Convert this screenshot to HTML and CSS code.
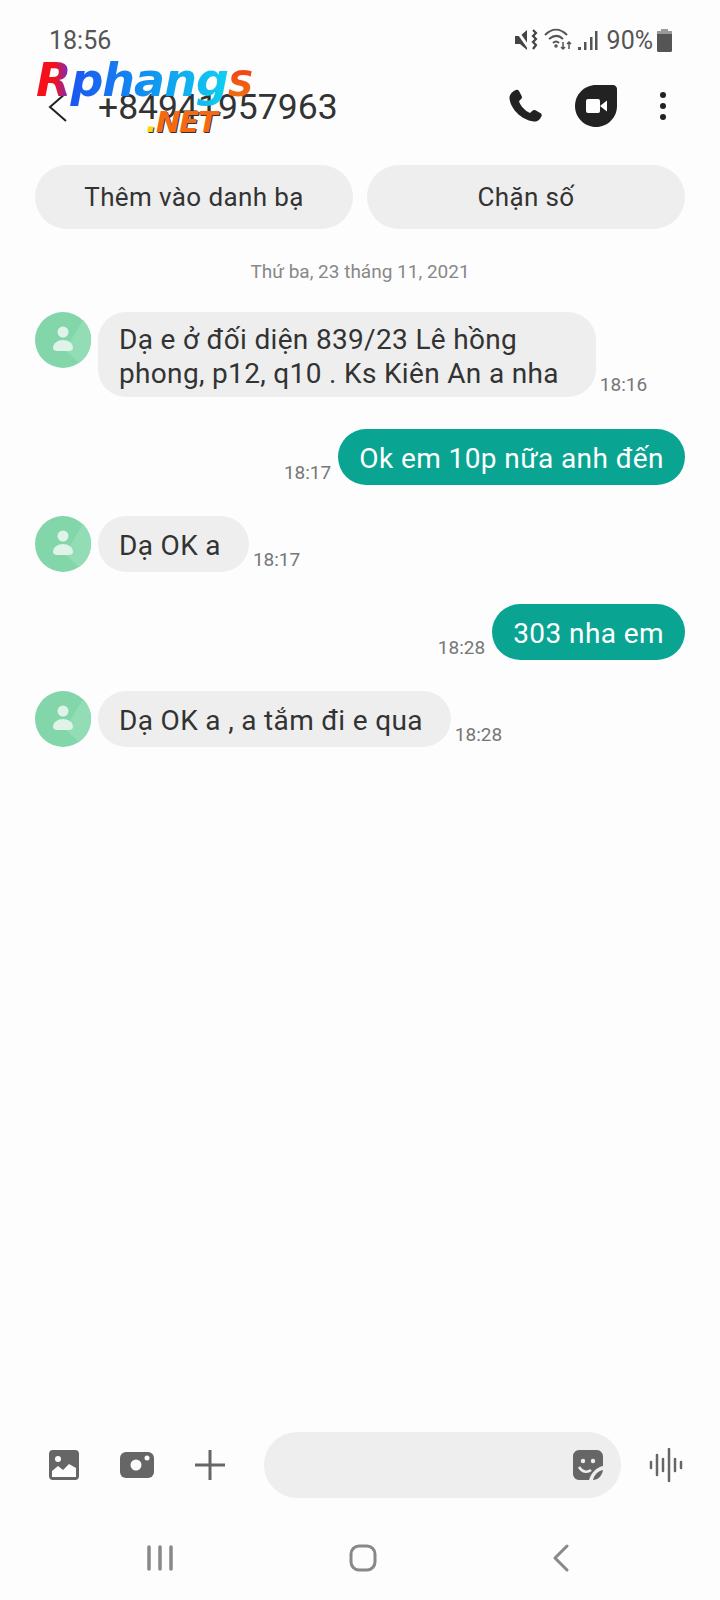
FILE: index.html
```html
<!DOCTYPE html>
<html>
<head>
  <meta charset="UTF-8">
  <meta name="viewport" content="width=device-width, initial-scale=1.0"/>
  <title>Messages</title>
  <link rel="stylesheet" href="styles.css">
</head>
<body>
  <div class="phone">
    <div class="status">
      <span class="clock">18:56</span>
      <div class="status-right">
        <svg class="ic-mute" width="25" height="24" viewBox="0 0 25 24"><path d="M1 8h5l7-6v20l-7-6H1z" fill="#444"/><path d="M1 0l14 20" stroke="#fdfdfd" stroke-width="3"/><path d="M19 2l3 3-3 3 3 3-3 3 3 3-3 4" fill="none" stroke="#444" stroke-width="2.200"/></svg>
        <svg class="ic-wifi" width="28" height="24" viewBox="0 0 28 24"><g fill="none" stroke="#555" stroke-width="2"><path d="M1 7c7-7 15-7 22 0"/><path d="M5 11c5-4 10-4 14 0"/><path d="M9 15c2-2 4-2 6 0"/></g><circle cx="12" cy="18" r="1.800" fill="#555"/><path d="M19 14v7M17 19l2 2 2-2M25 21v-7M23 16l2-2 2 2" fill="none" stroke="#555" stroke-width="1.500"/></svg>
        <svg width="20" height="22" viewBox="0 0 20 22"><g fill="#555"><rect x="0" y="18" width="3" height="3"/><rect x="6" y="13" width="2.500" height="8"/><rect x="12" y="8" width="2.500" height="13"/><rect x="17" y="2" width="2.500" height="19"/></g></svg>
        <span class="batt-text">90%</span>
        <svg width="15" height="23" viewBox="0 0 15 23"><rect x="4" y="0" width="7" height="3" fill="#999"/><rect x="0" y="2" width="15" height="21" rx="1.500" fill="#555"/><rect x="0" y="2" width="15" height="3" fill="#999"/></svg>
      </div>
    </div>

    <div class="header">
      <svg class="back" width="20" height="30" viewBox="0 0 20 30"><path d="M18 1L2 15l16 14" fill="none" stroke="#222" stroke-width="2"/></svg>
      <span class="number">+84941957963</span>
      <svg class="call" width="40" height="40" viewBox="0 0 24 24"><path d="M6.600 1.800c.7-.3 1.400-.1 1.800.6l1.600 3c.3.6.2 1.200-.2 1.700L8.400 8.600c.9 2.800 3.600 5.800 6.600 7l1.600-1.500c.5-.4 1.100-.5 1.700-.2l3.100 1.800c.6.4.8 1.100.5 1.800-.8 1.900-2.500 3.500-4.700 3.200C9.500 19.700 3.300 12.800 2.700 6.900c-.2-2.300 1.800-4.300 3.900-5.100z" fill="#222"/></svg>
      <svg class="duo" width="42" height="42" viewBox="0 0 42 42"><path d="M21 0h17c2.200 0 4 1.800 4 4v17c0 11.600-9.400 21-21 21S0 32.600 0 21 9.400 0 21 0z" fill="#222"/><rect x="11" y="14" width="14" height="14" rx="2" fill="#fff"/><path d="M25 21l7-5.500v11z" fill="#fff"/></svg>
      <div class="dots"><i></i><i></i><i></i></div>
    </div>

    <div class="actions">
      <div class="action">Thêm vào danh bạ</div>
      <div class="action">Chặn số</div>
    </div>

    <div class="date">Thứ ba, 23 tháng 11, 2021</div>

    <div class="messages">
      <div class="row in">
        <svg class="avatar" viewBox="0 0 56 56"><circle cx="28" cy="28" r="28" fill="#82d6aa"/><path d="M48 8A28 28 0 0 1 44 51L30 38z" fill="#92dcb6"/><circle cx="28" cy="20" r="5.500" fill="#dff3e8"/><path d="M18 36c0-5 5-8 10-8s10 3 10 8c0 2-2 3-4 3H22c-2 0-4-1-4-3z" fill="#dff3e8"/></svg>
        <div class="bubble wrapped">Dạ e ở đối diện 839/23 Lê hồng<br>phong, p12, q10 . Ks Kiên An a nha</div>
        <span class="time">18:16</span>
      </div>
      <div class="row out">
        <span class="time">18:17</span>
        <div class="bubble">Ok em 10p nữa anh đến</div>
      </div>
      <div class="row in">
        <svg class="avatar" viewBox="0 0 56 56"><circle cx="28" cy="28" r="28" fill="#82d6aa"/><path d="M48 8A28 28 0 0 1 44 51L30 38z" fill="#92dcb6"/><circle cx="28" cy="20" r="5.500" fill="#dff3e8"/><path d="M18 36c0-5 5-8 10-8s10 3 10 8c0 2-2 3-4 3H22c-2 0-4-1-4-3z" fill="#dff3e8"/></svg>
        <div class="bubble">Dạ OK a</div>
        <span class="time">18:17</span>
      </div>
      <div class="row out">
        <span class="time">18:28</span>
        <div class="bubble">303 nha em</div>
      </div>
      <div class="row in">
        <svg class="avatar" viewBox="0 0 56 56"><circle cx="28" cy="28" r="28" fill="#82d6aa"/><path d="M48 8A28 28 0 0 1 44 51L30 38z" fill="#92dcb6"/><circle cx="28" cy="20" r="5.500" fill="#dff3e8"/><path d="M18 36c0-5 5-8 10-8s10 3 10 8c0 2-2 3-4 3H22c-2 0-4-1-4-3z" fill="#dff3e8"/></svg>
        <div class="bubble">Dạ OK a , a tắm đi e qua</div>
        <span class="time">18:28</span>
      </div>
    </div>

    <div class="composer">
      <svg class="ic-gallery" width="30" height="30" viewBox="0 0 30 30"><rect width="30" height="30" rx="4" fill="#666"/><circle cx="9" cy="9" r="3" fill="#fdfdfd"/><path d="M3 27v-6l6-5 5 4 6-6 7 4v9z" fill="#fdfdfd"/></svg>
      <svg class="ic-camera" width="34" height="26" viewBox="0 0 34 26"><rect width="34" height="26" rx="6" fill="#666"/><circle cx="16" cy="13" r="5.500" fill="#fdfdfd"/><circle cx="27" cy="6" r="2.500" fill="#fdfdfd"/></svg>
      <svg class="ic-plus" width="30" height="30" viewBox="0 0 30 30"><path d="M15 0v30M0 15h30" stroke="#666" stroke-width="3" stroke-linecap="round"/></svg>
      <div class="input">
        <svg width="30" height="30" viewBox="0 0 30 30"><path d="M6 0h18c3 0 6 3 6 6v10C24 17 18 23 16 30H6c-3 0-6-3-6-6V6c0-3 3-6 6-6z" fill="#666"/><circle cx="10" cy="11" r="2.200" fill="#eee"/><circle cx="20" cy="11" r="2.200" fill="#eee"/><path d="M6 17c3 5 8 6 12 3" fill="none" stroke="#eee" stroke-width="2.500"/><path d="M20 30c1-5 5-9 10-10-1 6-5 10-10 10z" fill="#666"/></svg>
      </div>
      <svg class="ic-voice" width="34" height="34" viewBox="0 0 34 34"><g stroke="#666" stroke-width="2.500" stroke-linecap="round"><path d="M2 14v6M8 7v20M14 11v12M20 1v32M26 11v12M32 14v6"/></g></svg>
    </div>

    <div class="nav">
      <svg width="26" height="26" viewBox="0 0 26 26"><path d="M2 2v22M13 2v22M24 2v22" stroke="#888" stroke-width="3.500" stroke-linecap="round"/></svg>
      <svg width="28" height="28" viewBox="0 0 28 28"><rect x="2" y="2" width="24" height="24" rx="8" fill="none" stroke="#888" stroke-width="3"/></svg>
      <svg width="18" height="28" viewBox="0 0 18 28"><path d="M15 2L3 14l12 12" fill="none" stroke="#888" stroke-width="3" stroke-linecap="round" stroke-linejoin="round"/></svg>
    </div>

    <!-- watermark sits over the header -->
    <div class="logo">
      <span class="logo-r">R</span><span class="logo-p">phang</span><span class="logo-s">S</span>
      <div class="logo-net"><span>.</span>NET</div>
    </div>
  </div>
</body>
</html>
```

FILE: styles.css
```css
body {
  margin: 0;
  font-family: Roboto, "Noto Sans", sans-serif;
  background: #fdfdfd;
}
.phone {
  position: relative;
  width: 720px;
  height: 1600px;
  display: flex;
  flex-direction: column;
  overflow: hidden;
}
.status {
  display: flex;
  justify-content: space-between;
  align-items: center;
  height: 30px;
  margin-top: 25px;
  padding: 0 48px 0 49px;
  color: #555;
}
.clock {
  font-size: 25px;
}
.status-right {
  display: flex;
  align-items: center;
  gap: 3px;
}
.ic-mute {
  margin-right: 2px;
}
.ic-wifi {
  margin-right: 3px;
}
.batt-text {
  font-size: 25px;
  margin: 0 1px 0 6px;
}
.header {
  display: flex;
  align-items: center;
  height: 50px;
  margin-top: 27px;
  padding-left: 48px;
}
.number {
  font-size: 35.5px;
  color: #333;
  margin-left: 30px;
  width: 377px;
}
.call {
  margin-left: 30px;
}
.duo {
  margin-left: 30px;
  margin-bottom: 2px;
}
.dots {
  display: flex;
  flex-direction: column;
  gap: 4.6px;
  margin-left: 43px;
  margin-bottom: 2px;
}
.dots i {
  width: 6px;
  height: 6px;
  border-radius: 50%;
  background: #222;
}
.actions {
  display: flex;
  gap: 14px;
  padding: 0 35px;
  margin-top: 33px;
}
.action {
  flex: 1;
  height: 64px;
  line-height: 64px;
  border-radius: 32px;
  background: #eeeeee;
  text-align: center;
  font-size: 26px;
  letter-spacing: 0.38px;
  color: #333;
}
.date {
  text-align: center;
  font-size: 19px;
  color: #888;
  margin-top: 31px;
  height: 24px;
  line-height: 24px;
}
.messages {
  display: flex;
  flex-direction: column;
  gap: 31.6px;
  padding: 0 35px;
  margin-top: 28px;
  flex: 1;
}
.row {
  display: flex;
  align-items: flex-end;
  gap: 4px;
}
.row.out {
  justify-content: flex-end;
  gap: 7px;
}
.avatar {
  width: 56px;
  height: 56px;
  margin-right: 3px;
  align-self: flex-start;
}
.bubble {
  box-sizing: border-box;
  min-height: 56px;
  display: flex;
  align-items: center;
  font-size: 28px;
  letter-spacing: 0.42px;
  line-height: 34px;
  padding: 12px 21px 8px;
  border-radius: 28px;
  background: #eeeeee;
  color: #333;
}
.row.in .bubble {
  display: block;
  letter-spacing: 0.33px;
  padding-top: 12.5px;
  padding-right: 28px;
}
.row.in .bubble.wrapped {
  padding-top: 10.5px;
  padding-bottom: 6.5px;
  padding-right: 37px;
}
.row.out .bubble {
  background: #0aa493;
  color: #fff;
}
.time {
  font-size: 19px;
  color: #777;
  line-height: 24px;
}
.composer {
  display: flex;
  align-items: center;
  height: 66px;
  padding-left: 49px;
}
.ic-camera {
  margin-left: 41px;
}
.ic-plus {
  margin-left: 41px;
}
.input {
  display: flex;
  align-items: center;
  justify-content: flex-end;
  width: 357px;
  height: 66px;
  margin-left: 39px;
  padding-right: 18px;
  box-sizing: border-box;
  border-radius: 33px;
  background: #eeeeee;
}
.ic-voice {
  margin-left: 28px;
}
.nav {
  display: flex;
  align-items: center;
  justify-content: space-between;
  height: 30px;
  padding: 0 150px 0 147px;
  margin: 45px 0 27px;
}
.logo {
  position: absolute;
  left: 36px;
  top: 53px;
  font-family: "DejaVu Sans", sans-serif;
  font-weight: bold;
  font-style: italic;
  font-size: 46px;
  line-height: 54px;
  white-space: nowrap;
  letter-spacing: -1px;
}
.logo-r {
  background: linear-gradient(90deg, #f5101c 55%, #6a30d0);
  -webkit-background-clip: text;
  background-clip: text;
  color: transparent;
}
.logo-p {
  background: linear-gradient(90deg, #1c55f0, #10a0f0 60%, #10d0f0);
  -webkit-background-clip: text;
  background-clip: text;
  color: transparent;
}
.logo-s {
  background: linear-gradient(180deg, #f03a18, #f07a10);
  -webkit-background-clip: text;
  background-clip: text;
  color: transparent;
  font-size: 36px;
}
.logo-net {
  position: absolute;
  left: 110px;
  top: 52px;
  font-size: 29px;
  line-height: 34px;
  letter-spacing: -1px;
  color: #f56a10;
  text-shadow: 1px 1px 0 #333;
}
.logo-net span {
  color: #f5d810;
}
```
